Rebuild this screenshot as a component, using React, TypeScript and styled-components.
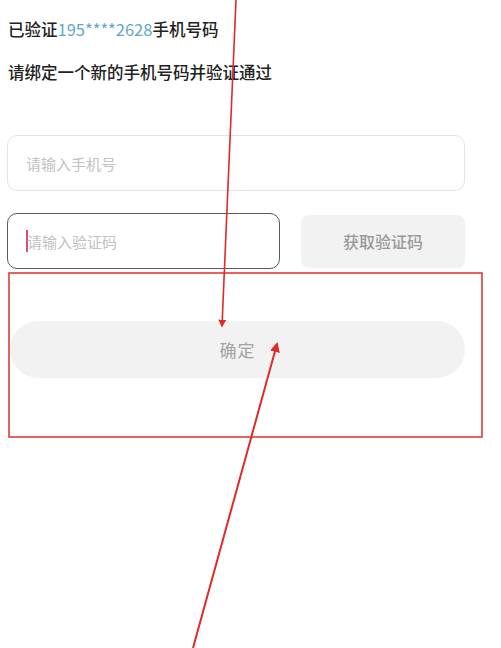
import styled, { createGlobalStyle } from "styled-components";

const GlobalStyle = createGlobalStyle`
  html, body {
    margin: 0;
    padding: 0;
    background: #ffffff;
  }
  body {
    font-family: "Noto Sans CJK SC", "Noto Sans", sans-serif;
    color: #222222;
  }
`;

const Page = styled.div`
  position: relative;
  width: 501px;
  height: 648px;
  box-sizing: border-box;
  padding: 17px 36px 0 7px;
  overflow: hidden;
`;

const Info = styled.p`
  margin: 0 0 19px 1px;
  font-size: 16.5px;
  font-weight: 500;
  line-height: 24px;
  color: #222222;
  white-space: nowrap;
`;

const Phone = styled.span`
  color: #62a8cc;
  font-weight: 400;
`;

const Form = styled.div`
  display: flex;
  flex-direction: column;
  margin-top: 51px;
`;

const Row = styled.div`
  display: flex;
  align-items: center;
  gap: 21px;
  margin-bottom: 52px;
`;

const Field = styled.div<{ $active?: boolean }>`
  flex: 1;
  height: 56px;
  box-sizing: border-box;
  display: flex;
  align-items: center;
  padding: 0 18px;
  border: 1px solid ${(p) => (p.$active ? "#5a5a5a" : "#e3e3e3")};
  border-radius: 10px;
  background: #ffffff;
`;

const FullField = styled(Field)`
  flex: none;
  margin-bottom: 22px;
`;

const Placeholder = styled.span`
  font-size: 15px;
  color: #c2c2c2;
`;

const Caret = styled.span`
  width: 2px;
  height: 22px;
  margin-right: -1px;
  background: #d64f7e;
`;

const CodeButton = styled.div`
  width: 164px;
  height: 53px;
  display: flex;
  align-items: center;
  justify-content: center;
  border-radius: 8px;
  background: #f2f2f2;
  color: #9a9a9a;
  font-size: 16px;
  font-weight: 500;
`;

const Submit = styled.div`
  height: 57px;
  margin-left: 3px;
  display: flex;
  align-items: center;
  justify-content: center;
  border-radius: 29px;
  background: #f2f2f2;
  color: #a3a3a3;
  font-size: 17px;
  letter-spacing: 1px;
`;

const Annotations = styled.svg`
  position: absolute;
  left: 0;
  top: 0;
  pointer-events: none;
`;

export default function App() {
  return (
    <>
      <GlobalStyle />
      <Page>
        <Info>
          已验证<Phone>195****2628</Phone>手机号码
        </Info>
        <Info>请绑定一个新的手机号码并验证通过</Info>
        <Form>
          <FullField>
            <Placeholder>请输入手机号</Placeholder>
          </FullField>
          <Row>
            <Field $active>
              <Caret />
              <Placeholder>请输入验证码</Placeholder>
            </Field>
            <CodeButton>获取验证码</CodeButton>
          </Row>
          <Submit>确定</Submit>
        </Form>

        {/* markup drawn over the screenshot */}
        <Annotations width="501" height="648" viewBox="0 0 501 648">
          <defs>
            <marker
              id="head"
              viewBox="0 0 10 10"
              refX="8"
              refY="5"
              markerWidth="5"
              markerHeight="5"
              orient="auto"
            >
              <path d="M0 0 L10 5 L0 10 z" fill="#e02a25" />
            </marker>
          </defs>
          <rect x="9" y="273" width="473" height="164" fill="none" stroke="#e23a36" strokeWidth="1.6" />
          <line x1="236" y1="0" x2="222" y2="326" stroke="#e02a25" strokeWidth="1.6" markerEnd="url(#head)" />
          <line x1="193" y1="648" x2="277" y2="344" stroke="#e02a25" strokeWidth="2" markerEnd="url(#head)" />
        </Annotations>
      </Page>
    </>
  );
}
